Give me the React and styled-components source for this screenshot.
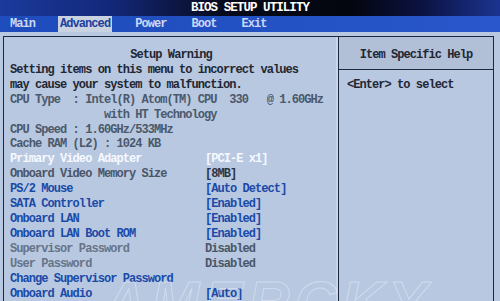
import React from 'react';
import styled, { createGlobalStyle } from 'styled-components';

const GlobalStyle = createGlobalStyle`
  html, body {
    margin: 0;
    padding: 0;
    overflow: hidden;
    background: #b8c8e0;
  }
`;

const tones = {
  warn: '#1f2734',
  info: '#4b596c',
  active: '#f6f9ff',
  link: '#1a4aa8',
  dim: '#4a5668',
  faint: '#66748a',
  value: '#2c3444',
};

const Screen = styled.div`
  position: relative;
  width: 500px;
  height: 301px;
  overflow: hidden;
  background: #b8c8e0;
  font-family: "Liberation Mono", "DejaVu Sans Mono", monospace;
  font-weight: bold;
  font-size: 12px;
  letter-spacing: -0.94px;
`;

const TitleBar = styled.div`
  height: 16px;
  display: flex;
  align-items: center;
  justify-content: center;
  color: #ffffff;
  font-size: 12.5px;
  background: linear-gradient(90deg, #1a3a9c 0%, #13287a 22%, #070a1c 45%, #04060e 70%, #0b1240 84%, #1c3490 100%);
`;

const MenuBar = styled.div`
  height: 16px;
  display: flex;
  align-items: stretch;
  gap: 21px;
  padding-left: 8px;
  background: linear-gradient(90deg, #1f4cbc 0%, #2352c4 60%, #2a58cc 100%);
`;

const MenuItem = styled.div`
  display: flex;
  align-items: center;
  padding: 0 2px;
  color: ${p => (p.$active ? '#1d3f9e' : '#cbd8f4')};
  background: ${p => (p.$active ? '#c9d2e0' : 'transparent')};
`;

const Frame = styled.div`
  margin: 4px 6px 0 3px;
  height: 300px;
  border: 1px solid #1c2840;
  display: grid;
  grid-template-columns: 335px 1fr;
`;

const MainPanel = styled.div`
  padding: 11px 0 0 6px;
  border-right: 1px solid #1c2840;
  box-shadow: inset -2px 0 0 #c9d6ea;
`;

const HelpPanel = styled.div`
  display: flex;
  flex-direction: column;
`;

const HelpHeader = styled.div`
  padding: 11px 0 6px;
  line-height: 15px;
  text-align: center;
  color: #1f2734;
  background: #b1c0d6;
  border-bottom: 1px solid #1c2840;
`;

const HelpBody = styled.div`
  padding: 8px 0 0 8px;
  line-height: 15px;
  color: #1f2734;
`;

const Centered = styled.div`
  line-height: 14.9px;
  text-align: center;
  padding-right: 6px;
  color: ${tones.warn};
`;

const Line = styled.div`
  line-height: 14.9px;
  white-space: pre;
  color: ${p => tones[p.$tone]};
`;

const Row = styled.div`
  display: grid;
  grid-template-columns: 195px 1fr;
  line-height: 14.9px;
  white-space: pre;
`;

const Cell = styled.span`
  color: ${p => tones[p.$tone]};
`;

const Watermark = styled.div`
  position: absolute;
  left: 104px;
  top: 268px;
  font-family: "Liberation Sans", Arial, sans-serif;
  font-size: 58px;
  font-weight: bold;
  font-style: italic;
  letter-spacing: 5px;
  color: transparent;
  -webkit-text-stroke: 1px rgba(236, 242, 252, 0.45);
  pointer-events: none;
`;

const menu = ['Main', 'Advanced', 'Power', 'Boot', 'Exit'];

const items = [
  ['Primary Video Adapter', '[PCI-E x1]', 'active', 'active'],
  ['Onboard Video Memory Size', '[8MB]', 'dim', 'value'],
  ['PS/2 Mouse', '[Auto Detect]', 'link', 'link'],
  ['SATA Controller', '[Enabled]', 'link', 'link'],
  ['Onboard LAN', '[Enabled]', 'link', 'link'],
  ['Onboard LAN Boot ROM', '[Enabled]', 'link', 'link'],
  ['Supervisor Password', 'Disabled', 'faint', 'dim'],
  ['User Password', 'Disabled', 'faint', 'dim'],
  ['Change Supervisor Password', '', 'link', 'link'],
  ['Onboard Audio', '[Auto]', 'link', 'link'],
];

export default function App() {
  return (
    <Screen>
      <GlobalStyle />
      <TitleBar>BIOS SETUP UTILITY</TitleBar>
      <MenuBar>
        {menu.map(m => (
          <MenuItem key={m} $active={m === 'Advanced'}>{m}</MenuItem>
        ))}
      </MenuBar>
      <Frame>
        <MainPanel>
          <Centered>Setup Warning</Centered>
          <Line $tone="warn">Setting items on this menu to incorrect values</Line>
          <Line $tone="warn">may cause your system to malfunction.</Line>
          <Line $tone="info">CPU Type  : Intel(R) Atom(TM) CPU  330   @ 1.60GHz</Line>
          <Line $tone="info">{'               with HT Technology'}</Line>
          <Line $tone="info">CPU Speed : 1.60GHz/533MHz</Line>
          <Line $tone="info">Cache RAM (L2) : 1024 KB</Line>
          {items.map(([label, value, lt, vt]) => (
            <Row key={label}>
              <Cell $tone={lt}>{label}</Cell>
              <Cell $tone={vt}>{value}</Cell>
            </Row>
          ))}
        </MainPanel>
        <HelpPanel>
          <HelpHeader>Item Specific Help</HelpHeader>
          <HelpBody>&lt;Enter&gt; to select</HelpBody>
        </HelpPanel>
      </Frame>
      <Watermark>AMERCKY</Watermark>
    </Screen>
  );
}
